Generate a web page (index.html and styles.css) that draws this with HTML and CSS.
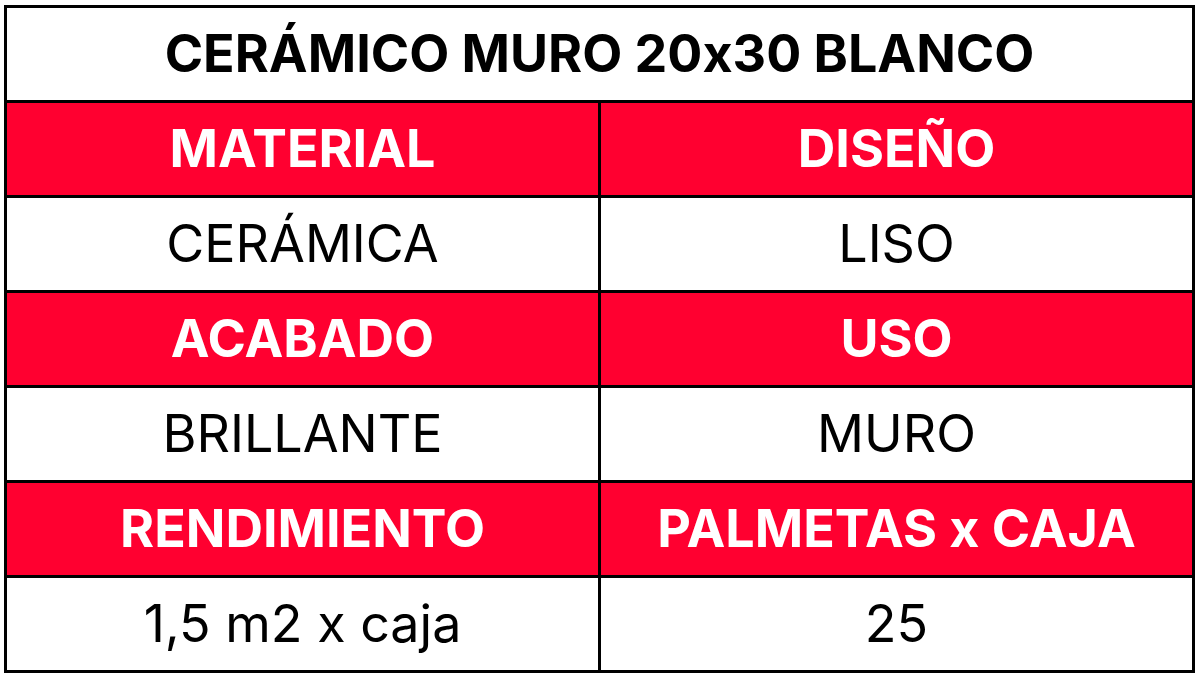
FILE: index.html
```html
<!DOCTYPE html>
<html lang="es">
<head>
<meta charset="utf-8">
<title>Cerámico Muro 20x30 Blanco</title>
<link rel="stylesheet" href="styles.css">
</head>
<body>
<div class="sheet">
  <div class="spec">
    <div class="cell title">CERÁMICO MURO 20x30 BLANCO</div>
    <div class="cell head">MATERIAL</div>
    <div class="cell head">DISEÑO</div>
    <div class="cell val">CERÁMICA</div>
    <div class="cell val">LISO</div>
    <div class="cell head">ACABADO</div>
    <div class="cell head">USO</div>
    <div class="cell val">BRILLANTE</div>
    <div class="cell val">MURO</div>
    <div class="cell head">RENDIMIENTO</div>
    <div class="cell head">PALMETAS x CAJA</div>
    <div class="cell val">1,5 m2 x caja</div>
    <div class="cell val">25</div>
  </div>
</div>
</body>
</html>
```

FILE: styles.css
```css
html, body {
  margin: 0;
  padding: 0;
  background: #ffffff;
}
.sheet {
  padding: 5px 5px 0 4px;
}
.spec {
  width: 1191px;
  box-sizing: border-box;
  display: grid;
  grid-template-columns: 591px 591px;
  grid-template-rows: repeat(7, 92px);
  gap: 3px;
  padding: 3px;
  background: #000000;
  font-family: "Inter", "Liberation Sans", sans-serif;
  font-feature-settings: "calt" 0;
  font-variant-ligatures: none;
}
.cell {
  display: flex;
  align-items: center;
  justify-content: center;
  font-size: 52px;
  line-height: 1;
  white-space: nowrap;
}
.title {
  grid-column: 1 / 3;
  background: #ffffff;
  color: #000000;
  font-weight: 700;
}
.head {
  background: #ff0030;
  color: #ffffff;
  font-weight: 700;
}
.val {
  background: #ffffff;
  color: #000000;
  font-weight: 400;
}
```
